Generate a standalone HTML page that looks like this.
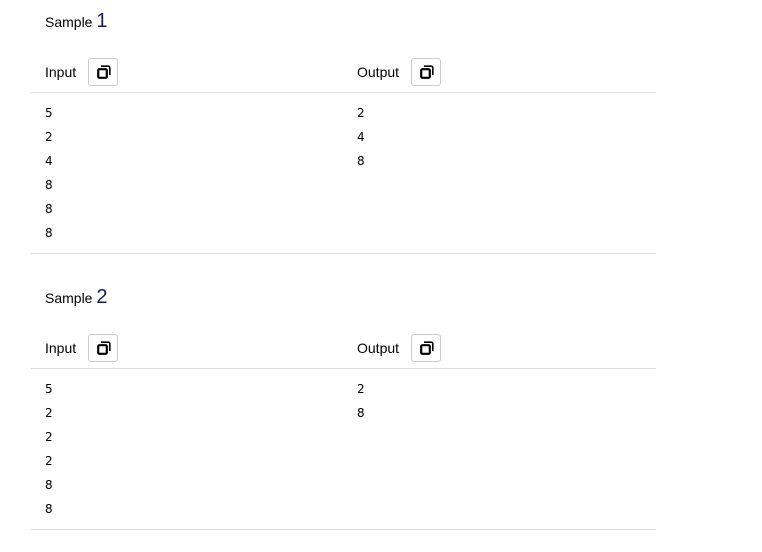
<!DOCTYPE html>
<html><head><style>
body{margin:0;background:#fff;font-family:"Liberation Sans",sans-serif;color:#000;}
.s{position:absolute;left:0;width:762px;height:276px}
.t{position:absolute;left:45px;top:10px;font-size:14px}
.t b{font-weight:normal;font-size:20px;color:#1a1a5e}
.lb{position:absolute;top:64px;font-size:14px}
.btn{position:absolute;top:58px;width:30px;height:28px;border:1px solid #ccc;border-radius:3px;box-sizing:border-box}
.btn svg{position:absolute;left:8px;top:6px}
.hl{position:absolute;left:31px;width:625px;height:1px;background:#ddd}
.d{position:absolute;top:101px;line-height:24px;font-family:"DejaVu Sans","Liberation Sans",sans-serif;font-size:12px}
</style></head><body>
<div class="s" style="top:0">
<div class="t">Sample <b>1</b></div>
<div class="lb" style="left:45px">Input</div>
<div class="btn" style="left:88px"><svg width="14" height="14" viewBox="0 0 14 14"><path d="M4 1.2h7.3a1.5 1.5 0 0 1 1.5 1.5v7.3" fill="none" stroke="#000" stroke-width="1.6"/><rect x="1.2" y="4.2" width="8.6" height="8.6" rx="1.2" fill="none" stroke="#000" stroke-width="2.2"/></svg></div>
<div class="lb" style="left:357px">Output</div>
<div class="btn" style="left:411px"><svg width="14" height="14" viewBox="0 0 14 14"><path d="M4 1.2h7.3a1.5 1.5 0 0 1 1.5 1.5v7.3" fill="none" stroke="#000" stroke-width="1.6"/><rect x="1.2" y="4.2" width="8.6" height="8.6" rx="1.2" fill="none" stroke="#000" stroke-width="2.2"/></svg></div>
<div class="hl" style="top:92px"></div>
<div class="d" style="left:45px">5<br>2<br>4<br>8<br>8<br>8</div>
<div class="d" style="left:357px">2<br>4<br>8</div>
<div class="hl" style="top:253px"></div>
</div>
<div class="s" style="top:276px">
<div class="t">Sample <b>2</b></div>
<div class="lb" style="left:45px">Input</div>
<div class="btn" style="left:88px"><svg width="14" height="14" viewBox="0 0 14 14"><path d="M4 1.2h7.3a1.5 1.5 0 0 1 1.5 1.5v7.3" fill="none" stroke="#000" stroke-width="1.6"/><rect x="1.2" y="4.2" width="8.6" height="8.6" rx="1.2" fill="none" stroke="#000" stroke-width="2.2"/></svg></div>
<div class="lb" style="left:357px">Output</div>
<div class="btn" style="left:411px"><svg width="14" height="14" viewBox="0 0 14 14"><path d="M4 1.2h7.3a1.5 1.5 0 0 1 1.5 1.5v7.3" fill="none" stroke="#000" stroke-width="1.6"/><rect x="1.2" y="4.2" width="8.6" height="8.6" rx="1.2" fill="none" stroke="#000" stroke-width="2.2"/></svg></div>
<div class="hl" style="top:92px"></div>
<div class="d" style="left:45px">5<br>2<br>2<br>2<br>8<br>8</div>
<div class="d" style="left:357px">2<br>8</div>
<div class="hl" style="top:253px"></div>
</div>
</body></html>
